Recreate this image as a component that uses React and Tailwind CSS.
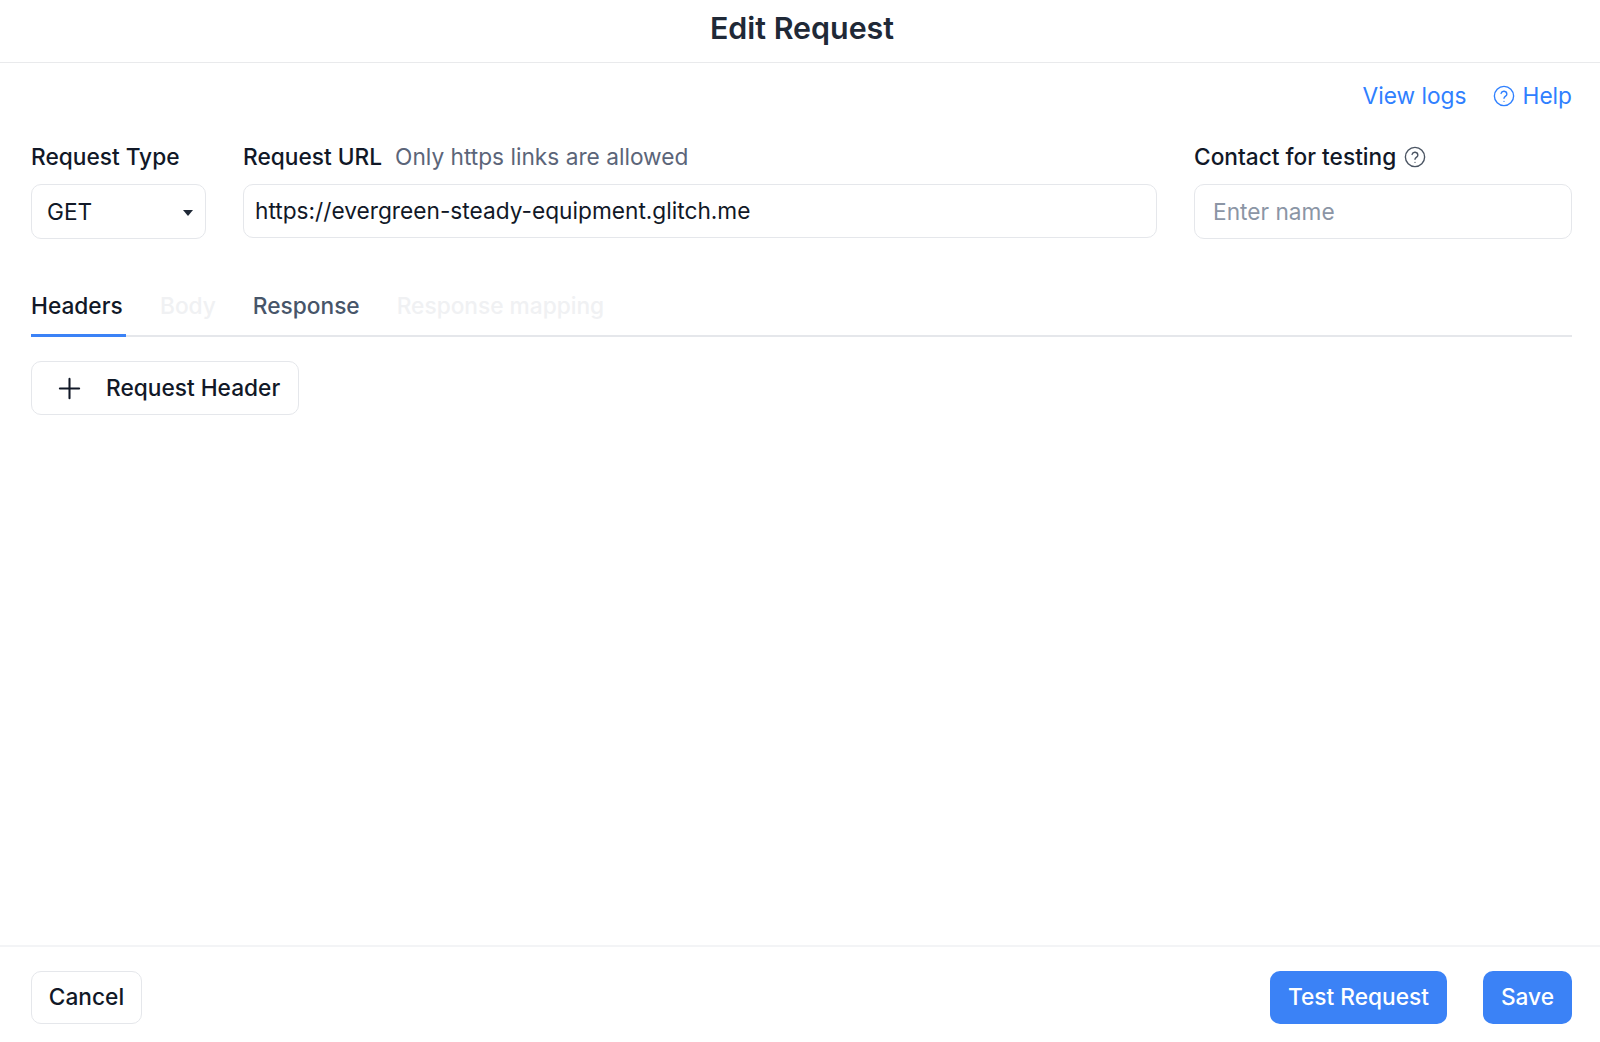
import React from 'react';
import { Plus } from 'lucide-react';

const HelpIcon = ({ className }) => (
  <svg viewBox="0 0 24 24" fill="none" stroke="currentColor" strokeWidth="1.5" strokeLinecap="round" strokeLinejoin="round" className={className}>
    <circle cx="12" cy="12" r="10.5" />
    <path d="M8.8 9.2a3.2 3.2 0 0 1 6.3.8c0 2.2-3.1 2.6-3.1 4.4" />
    <path d="M12 17.8h.01" />
  </svg>
);

const App = () => {
  return (
    <div className="flex h-[1042px] flex-col bg-white font-['Inter',sans-serif] text-[22.7px] text-[#111827]">
      <header className="flex h-[63px] shrink-0 items-center justify-center border-b border-[#e9eaec] pb-[6px] pl-[4px]">
        <h1 className="text-[30.4px] font-semibold leading-[36px] text-[#1f2937]">Edit Request</h1>
      </header>

      <main className="flex flex-1 flex-col pl-[31px] pr-[28px]">
        <div className="flex h-[33px] items-center justify-end gap-[26px] pt-[33px] text-[#2f80ff]">
          <a>View logs</a>
          <a className="flex items-center gap-[8px]">
            <HelpIcon className="h-[22px] w-[22px]" />
            Help
          </a>
        </div>

        <div className="mt-[45px] flex gap-[37px]">
          <div className="w-[175px] shrink-0">
            <div className="h-[32px] font-medium leading-[32px]">Request Type</div>
            <div className="mt-[11px] flex h-[55px] items-center justify-between rounded-[10px] border border-[#e5e7eb] pl-[15px] pr-[12px] pt-[2px]">
              <span>GET</span>
              <span className="h-0 w-0 border-x-[5px] border-t-[6px] border-x-transparent border-t-[#1f2937]" />
            </div>
          </div>

          <div className="min-w-0 flex-1">
            <div className="flex h-[32px] items-center gap-[13px] leading-[32px]">
              <span className="font-medium">Request URL</span>
              <span className="text-[#5b6579]">Only https links are allowed</span>
            </div>
            <div className="mt-[11px] flex h-[54px] items-center rounded-[10px] border border-[#e5e7eb] px-[11px]">
              https://evergreen-steady-equipment.glitch.me
            </div>
          </div>

          <div className="w-[378px] shrink-0">
            <div className="flex h-[32px] items-center gap-[8px] font-medium leading-[32px]">
              Contact for testing
              <HelpIcon className="h-[22px] w-[22px] text-[#4b5563]" />
            </div>
            <div className="mt-[11px] flex h-[55px] items-center rounded-[10px] border border-[#e5e7eb] px-[18px] pt-[2px] text-[#8b95a5]">
              Enter name
            </div>
          </div>
        </div>

        <div className="mt-[47px] flex h-[51px] gap-[37px] border-b-2 border-[#e5e7eb] font-medium">
          <div className="-mr-[3px] h-[51px] w-[95px] border-b-[3px] border-[#3b82f6] leading-[40px]">Headers</div>
          <div className="leading-[40px] text-[#f0f1f3]">Body</div>
          <div className="leading-[40px] text-[#475569]">Response</div>
          <div className="leading-[40px] text-[#f0f1f3]">Response mapping</div>
        </div>

        <button className="mt-[24px] flex h-[54px] w-[268px] items-center rounded-[10px] border border-[#e5e7eb] pl-[21px] font-medium">
          <Plus className="h-[33px] w-[33px]" strokeWidth={1.5} />
          <span className="ml-[20px]">Request Header</span>
        </button>
      </main>

      <footer className="flex h-[97px] shrink-0 items-start justify-between border-t-2 border-[#f3f4f6] pl-[31px] pr-[28px] pt-[24px] font-medium">
        <button className="h-[53px] w-[111px] rounded-[10px] border border-[#e5e7eb]">Cancel</button>
        <div className="flex gap-[36px] text-white">
          <button className="h-[53px] w-[177px] rounded-[10px] bg-[#3b82f6]">Test Request</button>
          <button className="h-[53px] w-[89px] rounded-[10px] bg-[#3b82f6]">Save</button>
        </div>
      </footer>
    </div>
  );
};

export default App;
